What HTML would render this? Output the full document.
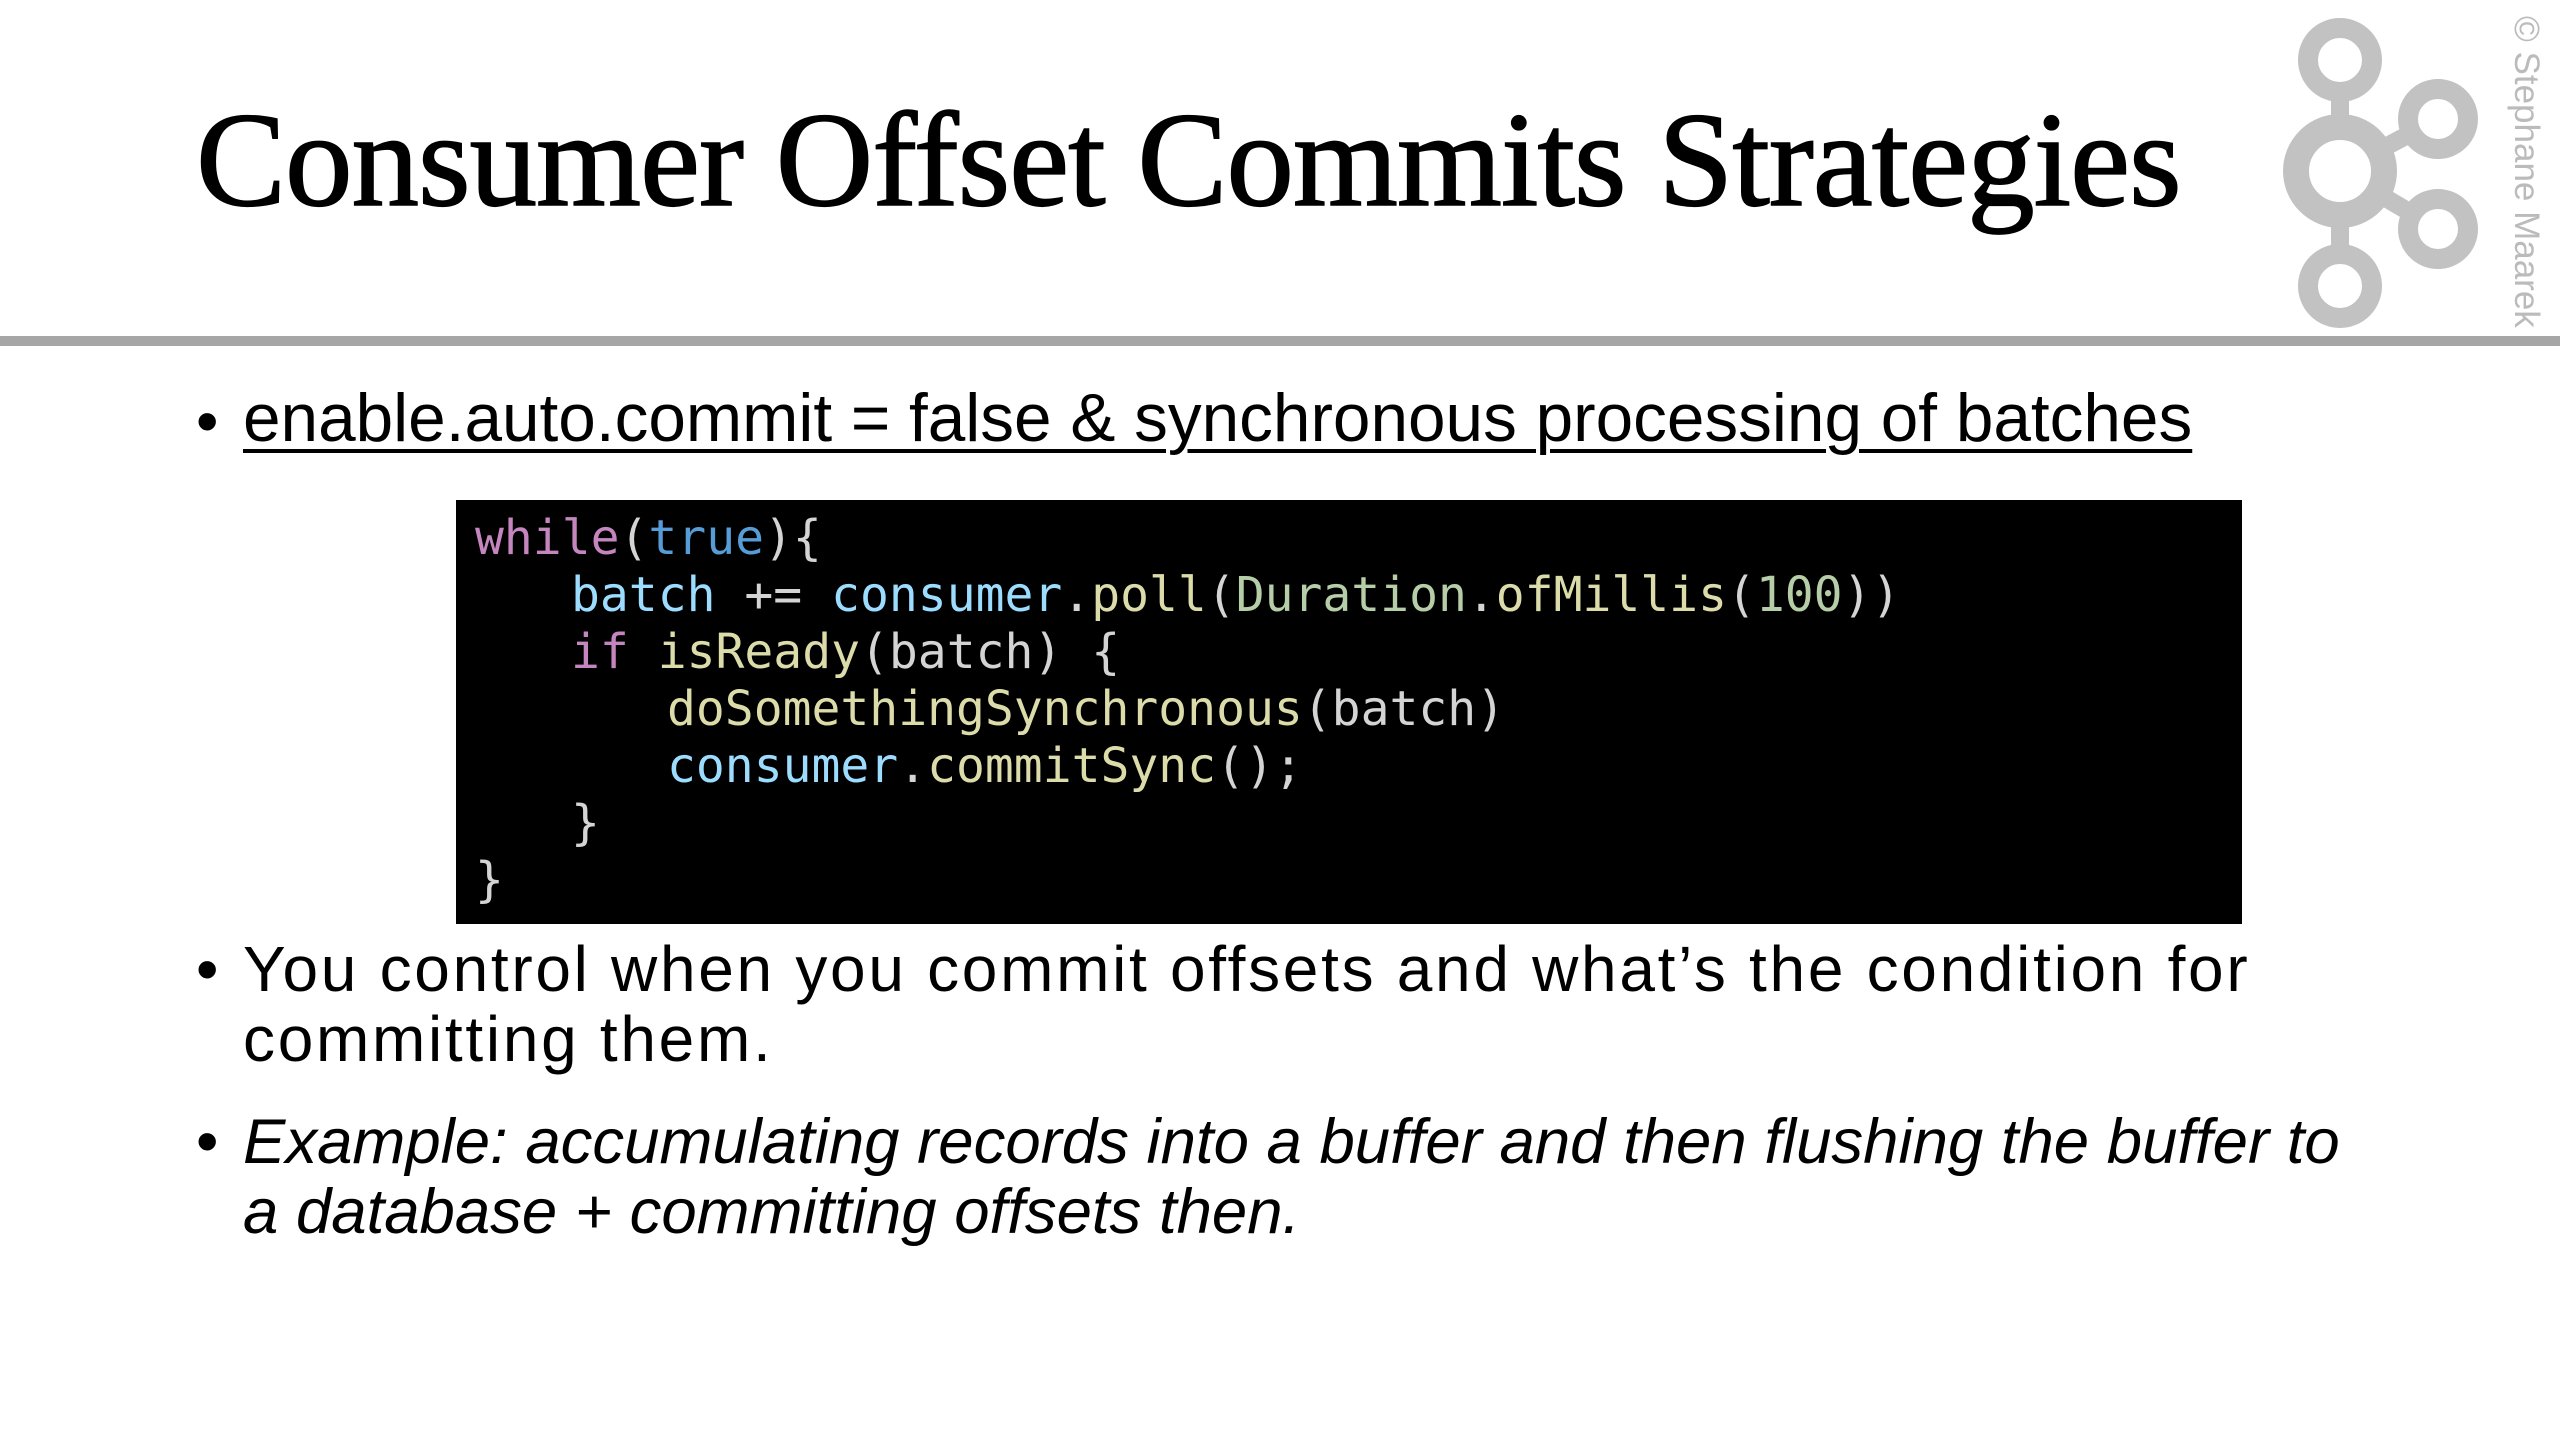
<!DOCTYPE html>
<html><head><meta charset="utf-8"><style>
body{margin:0;width:2560px;height:1440px;background:#fff;position:relative;overflow:hidden;font-family:"Liberation Sans",sans-serif;color:#000}
.abs{position:absolute;white-space:nowrap}
.title{left:196px;top:86px;font-family:"Liberation Serif",serif;font-size:135px;line-height:150px;letter-spacing:-1px;-webkit-text-stroke:1.5px #000}
.rule{left:0;top:336px;width:2560px;height:10px;background:#a6a6a6}
.b{font-size:64px;line-height:70px}
.code{left:456px;top:500px;width:1786px;height:424px;background:#000}
.cl{position:absolute;font-family:"DejaVu Sans Mono",monospace;font-size:48px;line-height:57px;white-space:pre;color:#d4d4d4}
.k{color:#c586c0}.t{color:#569cd6}.v{color:#9cdcfe}.f{color:#dcdcaa}.n{color:#b5cea8}
</style></head><body>
<div class="abs title">Consumer Offset Commits Strategies</div>
<div class="abs rule"></div>
<svg class="abs" style="left:2270px;top:10px" width="230" height="320" viewBox="2270 10 230 320">
<g stroke="#c2c2c2" fill="none">
<line x1="2340" y1="60" x2="2340" y2="286" stroke-width="18"/>
<line x1="2340" y1="171" x2="2438" y2="119" stroke-width="18"/>
<line x1="2340" y1="171" x2="2438" y2="229" stroke-width="18"/>
<circle cx="2340" cy="60" r="32" stroke-width="20" fill="#fff"/>
<circle cx="2340" cy="171" r="44" stroke-width="26" fill="#fff"/>
<circle cx="2340" cy="286" r="32" stroke-width="20" fill="#fff"/>
<circle cx="2438" cy="119" r="30" stroke-width="20" fill="#fff"/>
<circle cx="2438" cy="229" r="30" stroke-width="20" fill="#fff"/>
</g></svg>
<div class="abs" style="left:2508px;top:16px;transform-origin:0 0;transform:translate(36px,0) rotate(90deg);font-size:35px;color:#bbb;line-height:36px">© Stephane Maarek</div>
<div class="abs b" style="left:196px;top:386px">•</div>
<div class="abs b" style="left:243px;top:384px;font-size:67.5px;text-decoration:underline;text-decoration-thickness:4px;text-underline-offset:8px">enable.auto.commit = false &amp; synchronous processing of batches</div>
<div class="abs code">
<div class="cl" style="left:19px;top:10px"><span class="k">while</span>(<span class="t">true</span>){</div>
<div class="cl" style="left:115px;top:67px"><span class="v">batch</span> += <span class="v">consumer</span>.<span class="f">poll</span>(<span class="n">Duration</span>.<span class="f">ofMillis</span>(<span class="n">100</span>))</div>
<div class="cl" style="left:115px;top:124px"><span class="k">if</span> <span class="f">isReady</span>(batch) {</div>
<div class="cl" style="left:211px;top:181px"><span class="f">doSomethingSynchronous</span>(batch)</div>
<div class="cl" style="left:211px;top:238px"><span class="v">consumer</span>.<span class="f">commitSync</span>();</div>
<div class="cl" style="left:115px;top:295px">}</div>
<div class="cl" style="left:19px;top:352px">}</div>
</div>
<div class="abs b" style="left:196px;top:934px">•</div>
<div class="abs b" style="left:243px;top:934px;letter-spacing:2.7px">You control when you commit offsets and what’s the condition for<br>committing them.</div>
<div class="abs b" style="left:196px;top:1106px">•</div>
<div class="abs b" style="left:243px;top:1107px;font-style:italic;font-size:63.5px">Example: accumulating records into a buffer and then flushing the buffer to<br>a database + committing offsets then.</div>
</body></html>
